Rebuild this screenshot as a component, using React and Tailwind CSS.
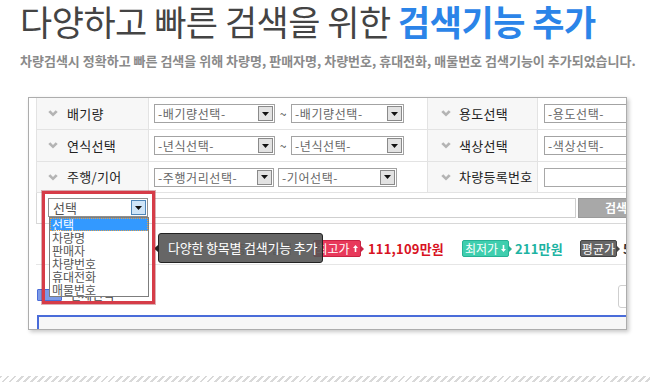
const Chev = () => (
  <svg width="10" height="7" viewBox="0 0 10 7" className="shrink-0">
    <path d="M0.3 2 L2.3 0.3 L5 3 L7.7 0.3 L9.7 2 L5 6.6 Z" fill="#b4b4b4" />
  </svg>
);

const Tri = () => (
  <svg width="7" height="4" viewBox="0 0 7 4">
    <path d="M0 0H7L3.5 4Z" fill="#111" />
  </svg>
);

function Sel({ cls, text }) {
  return (
    <div className={`flex h-[19px] shrink-0 items-stretch border border-[#a3a3a3] bg-white ${cls}`}>
      <span className="flex-1 overflow-hidden whitespace-nowrap pl-[3px] text-[12px] leading-[17px] tracking-[0.6px] text-[#666]">
        {text}
      </span>
      <span className="m-[1px] flex w-[15px] shrink-0 items-center justify-center border border-[#8a8a8a] bg-[#e2e2e2]">
        <Tri />
      </span>
    </div>
  );
}

function Label({ text, cls }) {
  return (
    <div className={`flex shrink-0 items-center border-r border-[#e3e3e3] bg-[#f7f7f7] text-[13px] text-[#222] ${cls}`}>
      <Chev />
      <span className="tracking-[0.3px]">{text}</span>
    </div>
  );
}

const UpArrow = () => (
  <svg width="5" height="7" viewBox="0 0 5 7" className="ml-[3px]">
    <path d="M2.5 0 L5 3 H3.3 V7 H1.7 V3 H0 Z" fill="#fff" />
  </svg>
);
const DownArrow = () => (
  <svg width="5" height="7" viewBox="0 0 5 7" className="ml-[3px]">
    <path d="M2.5 7 L5 4 H3.3 V0 H1.7 V4 H0 Z" fill="#fff" />
  </svg>
);

export default function App() {
  return (
    <div className="relative h-[382px] w-[650px] overflow-hidden bg-white font-['Noto_Sans_CJK_KR',sans-serif]">
      <h1 className="whitespace-nowrap pl-[20px] text-[35px] leading-[42px] tracking-[-0.5px] text-[#444]">
        다양하고 빠른 검색을 위한 <span className="font-bold text-[#2b84e8]">검색기능 추가</span>
      </h1>
      <p className="mt-[11px] whitespace-nowrap pl-[20px] text-[13px] font-bold leading-[16px] text-[#8a8a8a]">
        차량검색시 정확하고 빠른 검색을 위해 차량명, 판매자명, 차량번호, 휴대전화, 매물번호 검색기능이 추가되었습니다.
      </p>

      <div className="ml-[28px] mt-[28px] h-[233px] w-[599px] overflow-hidden border border-[#adadad] bg-white shadow-[2px_2px_4px_rgba(0,0,0,0.22)]">
        <div className="ml-[7px] w-[700px]">
          {/* row 1 */}
          <div className="flex h-[32px] border-b border-l border-[#e3e3e3]">
            <Label text="배기량" cls="w-[112px] gap-[9px] pl-[11px]" />
            <div className="flex w-[279px] shrink-0 items-center border-r border-[#e3e3e3] pl-[5px]">
              <Sel cls="w-[121px]" text="-배기량선택-" />
              <span className="w-[16px] text-center text-[12px] text-[#444]">~</span>
              <Sel cls="w-[113px]" text="-배기량선택-" />
            </div>
            <Label text="용도선택" cls="w-[110px] gap-[8px] pl-[13px]" />
            <div className="flex items-center pl-[6px]">
              <Sel cls="w-[150px]" text="-용도선택-" />
            </div>
          </div>
          {/* row 2 */}
          <div className="flex h-[32px] border-b border-l border-[#e3e3e3]">
            <Label text="연식선택" cls="w-[112px] gap-[9px] pl-[11px]" />
            <div className="flex w-[279px] shrink-0 items-center border-r border-[#e3e3e3] pl-[5px]">
              <Sel cls="w-[121px]" text="-년식선택-" />
              <span className="w-[16px] text-center text-[12px] text-[#444]">~</span>
              <Sel cls="w-[113px]" text="-년식선택-" />
            </div>
            <Label text="색상선택" cls="w-[110px] gap-[8px] pl-[13px]" />
            <div className="flex items-center pl-[6px]">
              <Sel cls="w-[150px]" text="-색상선택-" />
            </div>
          </div>
          {/* row 3 */}
          <div className="flex h-[31px] border-b border-l border-[#e3e3e3]">
            <Label text="주행/기어" cls="w-[112px] gap-[9px] pl-[11px]" />
            <div className="flex w-[279px] shrink-0 items-center gap-[4px] border-r border-[#e3e3e3] pl-[5px]">
              <Sel cls="w-[120px]" text="-주행거리선택-" />
              <Sel cls="w-[119px]" text="-기어선택-" />
            </div>
            <Label text="차량등록번호" cls="w-[110px] gap-[8px] pl-[13px]" />
            <div className="flex items-center pl-[6px]">
              <div className="h-[19px] w-[150px] border border-[#a8a8a8] bg-white" />
            </div>
          </div>
          {/* search row */}
          <div className="relative flex h-[31px] items-start border-b border-l border-[#d8d8d8] pl-[11px] pt-[5px]">
            <div className="flex h-[19px] w-[100px] shrink-0 items-stretch border border-[#8f8f8f] bg-white">
              <span className="flex-1 pl-[4px] text-[13px] leading-[17px] text-[#555]">선택</span>
              <span className="m-[1px] flex w-[15px] items-center justify-center border border-[#4f86b8] bg-[#cfe5f8]">
                <Tri />
              </span>
            </div>
            <div className="ml-[4px] h-[20px] w-[424px] shrink-0 border border-[#cfcfcf] bg-white" />
            <div className="ml-[2px] flex h-[20px] w-[76px] shrink-0 items-center justify-center border border-[#9a9a9a] bg-[#a8a8a8] text-[12px] font-bold text-white">
              검색
            </div>

            {/* red highlight */}
            <div className="absolute left-[5px] top-[-2px] z-20 h-[113px] w-[113px] border-[3px] border-[#d63c48] shadow-[0_0_0_1px_rgba(150,30,40,0.35)]" />
            {/* dropdown list */}
            <div className="absolute left-[12px] top-[24px] z-10 w-[100px] border border-[#7d7d7d] bg-white text-[12px] leading-[13px] text-[#555]">
              <div className="bg-[#3399ff] pl-[2px] text-white outline-1 -outline-offset-1 outline-dotted outline-[#e2a04a]">선택</div>
              <div className="pl-[2px]">차량명</div>
              <div className="pl-[2px]">판매자</div>
              <div className="pl-[2px]">차량번호</div>
              <div className="pl-[2px]">휴대전화</div>
              <div className="pl-[2px]">매물번호</div>
            </div>
          </div>
          {/* price row */}
          <div className="relative flex h-[41px] items-start border-b border-[#e6e6e6] pl-[199px] pt-[16px]">
            <span className="h-[17px] w-[78px] shrink-0 overflow-hidden whitespace-nowrap text-[12px] leading-[17px] text-[#777]">총 검색결과</span>
            <div className="flex h-[17px] items-center">
              <span className="flex h-[17px] w-[48px] items-center justify-center rounded-[2px] border border-[#c92343] bg-[#e8395b] text-[12px] leading-[15px] text-white">
                최고가<UpArrow />
              </span>
              <svg width="3" height="6" viewBox="0 0 3 6"><path d="M0 0L3 3L0 6Z" fill="#c92343" /></svg>
              <span className="ml-[4px] text-[13px] font-bold tracking-[0.2px] text-[#d8121f]">111,109만원</span>
            </div>
            <div className="ml-[18px] flex h-[17px] items-center">
              <span className="flex h-[17px] w-[47px] items-center justify-center rounded-[2px] border border-[#27b296] bg-[#3fceae] text-[12px] leading-[15px] text-white">
                최저가<DownArrow />
              </span>
              <svg width="3" height="6" viewBox="0 0 3 6"><path d="M0 0L3 3L0 6Z" fill="#27b296" /></svg>
              <span className="ml-[3px] text-[13px] font-bold tracking-[0.2px] text-[#1db3a2]">211만원</span>
            </div>
            <div className="ml-[17px] flex h-[17px] items-center">
              <span className="flex h-[17px] w-[37px] items-center justify-center rounded-[2px] border border-[#444] bg-[#666] text-[12px] leading-[15px] text-white">
                평균가
              </span>
              <svg width="3" height="6" viewBox="0 0 3 6"><path d="M0 0L3 3L0 6Z" fill="#444" /></svg>
              <span className="ml-[3px] text-[13px] font-bold text-[#333]">5,</span>
            </div>

            {/* tooltip */}
            <div className="absolute left-[122px] top-[9px] z-10 flex h-[30px] w-[165px] items-center rounded-[3px] border border-[#222] bg-[#555555]/90 pl-[9px] text-[13px] tracking-[-0.2px] text-white">
              다양한 항목별 검색기능 추가
              <svg width="4" height="7" viewBox="0 0 4 7" className="absolute left-[-5px] top-[11px]">
                <path d="M4 0L0 3.5L4 7Z" fill="#222" />
              </svg>
            </div>
          </div>
          {/* check row */}
          <div className="flex h-[50px] items-start pl-[1px] pt-[24px]">
            <div className="h-[12px] w-[25px] shrink-0 rounded-[1px] border border-[#4a6cd9] bg-[#7d9be6]" />
            <span className="ml-[8px] text-[12px] leading-[12px] text-[#444]">전체선택</span>
            <div className="ml-[504px] mt-[-4px] h-[23px] w-[60px] shrink-0 rounded-[3px] border border-[#cfcfcf] bg-white" />
          </div>
          {/* blue box */}
          <div className="ml-[1px] h-[30px] border-l-2 border-t-2 border-[#4a6cd9] bg-[#f7f7f7]" />
        </div>
      </div>

      <div className="mt-[46px] h-[6px] bg-[repeating-linear-gradient(135deg,#d9d9d9_0_2px,transparent_2px_5px)]" />
    </div>
  );
}
